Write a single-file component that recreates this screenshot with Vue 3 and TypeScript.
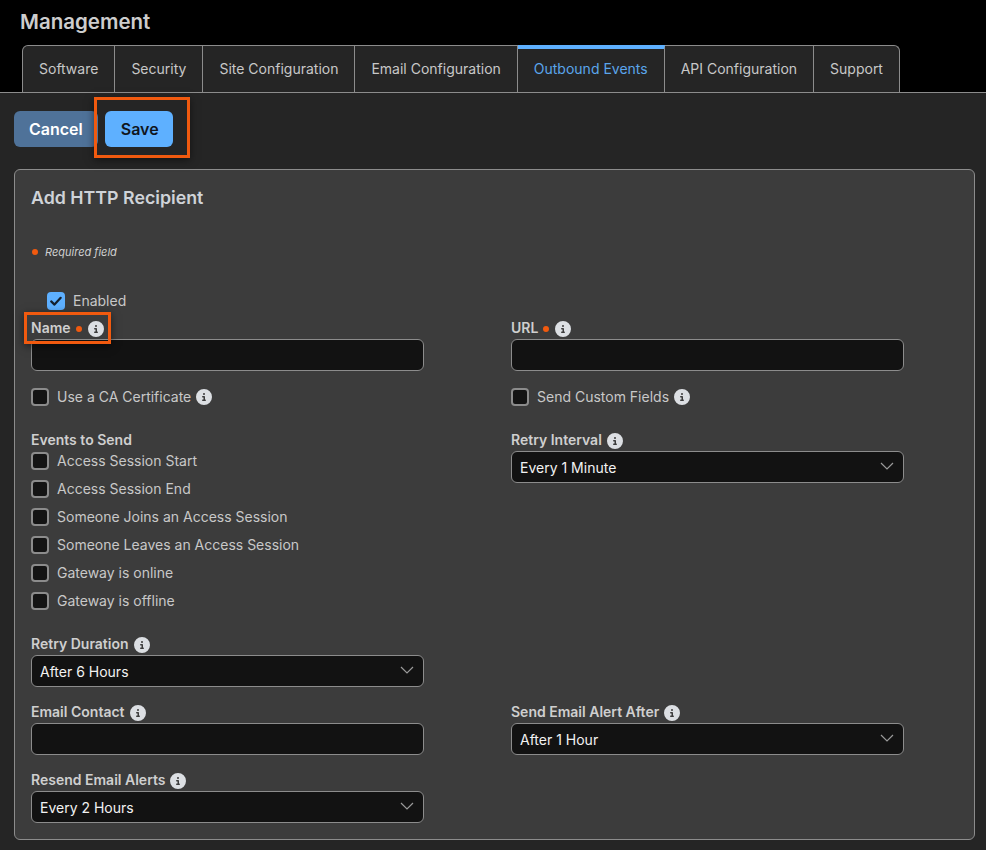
<script setup lang="ts">
const tabs = ['Software', 'Security', 'Site Configuration', 'Email Configuration', 'Outbound Events', 'API Configuration', 'Support']
const events = [
  'Access Session Start',
  'Access Session End',
  'Someone Joins an Access Session',
  'Someone Leaves an Access Session',
  'Gateway is online',
  'Gateway is offline',
]
const infoPath = 'M256 512A256 256 0 1 0 256 0a256 256 0 1 0 0 512zM216 336h24V272H216c-13.3 0-24-10.7-24-24s10.7-24 24-24h48c13.3 0 24 10.7 24 24v88h8c13.3 0 24 10.7 24 24s-10.7 24-24 24H216c-13.3 0-24-10.7-24-24s10.7-24 24-24zm40-208a32 32 0 1 1 0 64 32 32 0 1 1 0-64z'
</script>

<template>
  <div class="page">
    <header class="top">
      <h1 class="title">Management</h1>
      <nav class="tabs">
        <div v-for="t in tabs" :key="t" class="tab" :class="{ active: t === 'Outbound Events' }">{{ t }}</div>
      </nav>
    </header>
    <main class="body">
      <div class="actions">
        <button class="btn cancel">Cancel</button>
        <button class="btn save">Save</button>
        <div class="callout save-callout"></div>
      </div>
      <section class="card">
        <h2 class="card-title">Add HTTP Recipient</h2>
        <p class="required"><span class="dot"></span><em>Required field</em></p>
        <label class="check enabled">
          <span class="box on">
            <svg viewBox="0 0 18 18" width="18" height="18"><path d="M4.2 9.4l3.3 3.2 6.2-6.8" fill="none" stroke="#14202e" stroke-width="2.2" stroke-linecap="round" stroke-linejoin="round" /></svg>
          </span>
          Enabled
        </label>
        <div class="form">
          <div class="field name-field">
            <div class="label">Name<span class="dot"></span><svg class="info" viewBox="0 0 512 512"><path :d="infoPath" /></svg></div>
            <div class="input"></div>
            <div class="callout name-callout"></div>
          </div>
          <div class="field">
            <div class="label">URL<span class="dot"></span><svg class="info" viewBox="0 0 512 512"><path :d="infoPath" /></svg></div>
            <div class="input"></div>
          </div>

          <label class="check spaced"><span class="box"></span>Use a CA Certificate<svg class="info" viewBox="0 0 512 512"><path :d="infoPath" /></svg></label>
          <label class="check spaced"><span class="box"></span>Send Custom Fields<svg class="info" viewBox="0 0 512 512"><path :d="infoPath" /></svg></label>

          <div class="field events">
            <div class="label">Events to Send</div>
            <div class="event-list">
              <label v-for="e in events" :key="e" class="check"><span class="box"></span>{{ e }}</label>
            </div>
          </div>
          <div class="field">
            <div class="label">Retry Interval<svg class="info" viewBox="0 0 512 512"><path :d="infoPath" /></svg></div>
            <div class="input select">Every 1 Minute<svg class="chev" viewBox="0 0 14 8" width="14" height="8"><path d="M1 1l6 6 6-6" fill="none" stroke="#9a9a9a" stroke-width="1.2" /></svg></div>
          </div>

          <div class="field">
            <div class="label">Retry Duration<svg class="info" viewBox="0 0 512 512"><path :d="infoPath" /></svg></div>
            <div class="input select">After 6 Hours<svg class="chev" viewBox="0 0 14 8" width="14" height="8"><path d="M1 1l6 6 6-6" fill="none" stroke="#9a9a9a" stroke-width="1.2" /></svg></div>
          </div>
          <div></div>

          <div class="field">
            <div class="label">Email Contact<svg class="info" viewBox="0 0 512 512"><path :d="infoPath" /></svg></div>
            <div class="input"></div>
          </div>
          <div class="field">
            <div class="label">Send Email Alert After<svg class="info" viewBox="0 0 512 512"><path :d="infoPath" /></svg></div>
            <div class="input select">After 1 Hour<svg class="chev" viewBox="0 0 14 8" width="14" height="8"><path d="M1 1l6 6 6-6" fill="none" stroke="#9a9a9a" stroke-width="1.2" /></svg></div>
          </div>

          <div class="field">
            <div class="label">Resend Email Alerts<svg class="info" viewBox="0 0 512 512"><path :d="infoPath" /></svg></div>
            <div class="input select">Every 2 Hours<svg class="chev" viewBox="0 0 14 8" width="14" height="8"><path d="M1 1l6 6 6-6" fill="none" stroke="#9a9a9a" stroke-width="1.2" /></svg></div>
          </div>
        </div>
      </section>
    </main>
  </div>
</template>

<style>
html, body { background: #000; }
</style>

<style scoped>
.page {
  width: 986px;
  height: 850px;
  overflow: hidden;
  background: #000;
  font-family: Inter, "Liberation Sans", sans-serif;
  color: #cfcfcf;
  font-size: 14px;
}
.top {
  height: 92px;
  padding: 0 0 0 20px;
  box-sizing: border-box;
  position: relative;
}
.title {
  margin: 0;
  padding-top: 10px;
  font-size: 20.5px;
  line-height: 24px;
  font-weight: 600;
  color: #cdcdcd;
}
.tabs {
  position: absolute;
  left: 22px;
  bottom: 0;
  display: flex;
  height: 47px;
  background: #252525;
  border: 1px solid #8c8c8c;
  border-bottom: none;
  border-radius: 6px 6px 0 0;
  box-sizing: border-box;
}
.tab {
  display: flex;
  align-items: center;
  padding: 0 16px;
  border-right: 1px solid #8c8c8c;
  line-height: 20px;
  color: #c8c8c8;
}
.tab:last-child { border-right: none; }
.tab.active {
  color: #5ba5ec;
  border-top: 4px solid #5eb0ff;
  margin-top: -1px;
  padding-bottom: 3px;
  position: relative;
  z-index: 1;
}
.body {
  height: 758px;
  box-sizing: border-box;
  background: #252525;
  border-top: 1px solid #8c8c8c;
  padding: 18px 11px 0 14px;
}
.actions {
  position: relative;
  display: flex;
  gap: 7px;
  margin-bottom: 22px;
}
.btn {
  height: 36px;
  border: none;
  border-radius: 6px;
  font: 600 16px/20px Inter, "Liberation Sans", sans-serif;
  padding: 0 15px;
}
.cancel { background: #4f7299; color: #fff; }
.save { background: #5eb0ff; color: #10161d; padding: 0 14px 0 16px; }
.callout {
  position: absolute;
  border: 3px solid #f15a0f;
  box-sizing: border-box;
  box-shadow: 0 2px 8px rgba(0, 0, 0, 0.5);
  pointer-events: none;
}
.save-callout { left: 80px; top: -14px; width: 96px; height: 61px; }
.card {
  height: 671px;
  box-sizing: border-box;
  background: #3c3c3c;
  border: 1px solid #8c8c8c;
  border-radius: 6px;
  padding: 16px 16px 0;
}
.card-title {
  margin: 0;
  font-size: 17.8px;
  line-height: 24px;
  font-weight: 600;
  color: #cfd3d8;
}
.required {
  margin: 34px 0 0 1px;
  height: 16px;
  display: flex;
  align-items: center;
  font-size: 11px;
  color: #cfcfcf;
}
.dot {
  display: inline-block;
  width: 6px;
  height: 6px;
  border-radius: 50%;
  background: #f15a0f;
  margin: 0 7px 0 0;
}
.label .dot { margin: 0 6px 0 5px; }
.check {
  display: flex;
  align-items: center;
  height: 18px;
  gap: 8px;
  line-height: 18px;
  color: #c8c8c8;
}
.enabled { margin: 32px 0 0 16px; }
.box {
  width: 18px;
  height: 18px;
  box-sizing: border-box;
  background: #141414;
  border: 2px solid #8c8c8c;
  border-radius: 4px;
  flex: none;
}
.box.on { background: #5eb0ff; border: none; }
.box.on svg { display: block; }
.form {
  display: grid;
  grid-template-columns: 393px 393px;
  column-gap: 87px;
  row-gap: 16px;
  margin-top: 9px;
}
.field { position: relative; }
.label {
  display: flex;
  align-items: center;
  height: 20px;
  padding-bottom: 2px;
  box-sizing: border-box;
  font-weight: 600;
  color: #cfcfcf;
  line-height: 18px;
}
.info {
  width: 16px;
  height: 16px;
  fill: #dcdfe3;
  margin-left: 5px;
  flex: none;
}
.label .info { margin-top: 2px; }
.label .dot { margin-top: 2px; }
.label .dot + .info { margin-left: 0; }
.check .info { margin-left: -3px; }
.input {
  height: 32px;
  box-sizing: border-box;
  background: #121212;
  border: 1px solid #8c8c8c;
  border-radius: 6px;
}
.select {
  display: flex;
  align-items: center;
  justify-content: space-between;
  padding: 0 9px 0 8px;
  color: #f2f2f2;
}
.chev { margin-top: -2px; }
.spaced { margin: 1px 0 9px; }
.event-list {
  display: flex;
  flex-direction: column;
  gap: 10px;
  margin-top: 1px;
  margin-bottom: 9px;
}
.name-callout { left: -7px; top: -7px; width: 87px; height: 32px; }
</style>
